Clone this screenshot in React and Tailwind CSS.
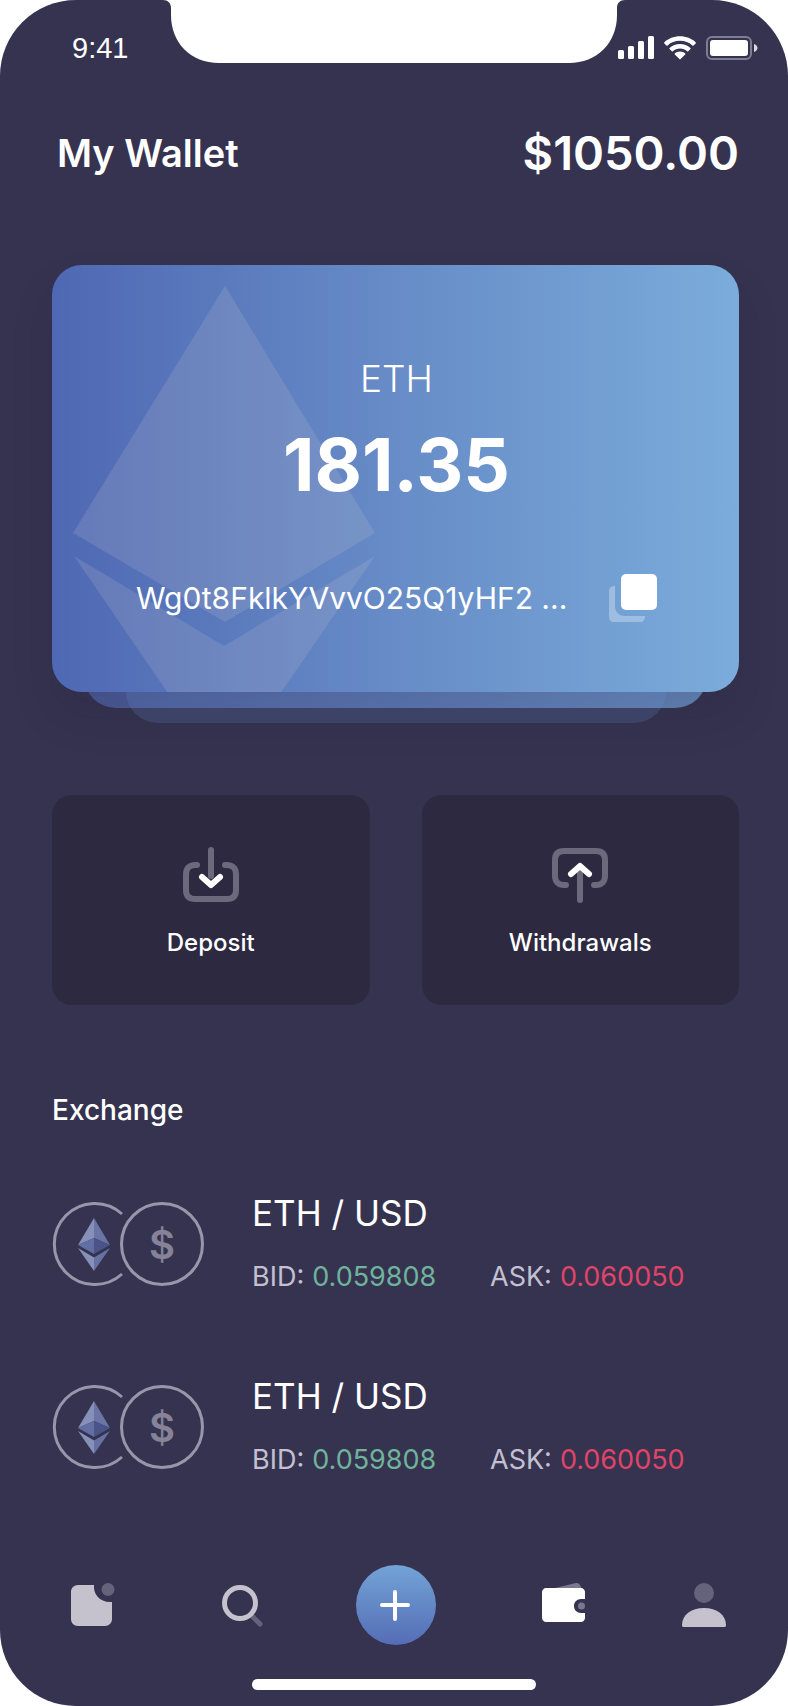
const pairs = [
    { id: 1, name: 'ETH / USD', bid: '0.059808', ask: '0.060050' },
    { id: 2, name: 'ETH / USD', bid: '0.059808', ask: '0.060050' },
];

function Notch() {
    return (
        <svg className="absolute top-0 left-1/2 -translate-x-1/2" width="462" height="63" viewBox="0 0 462 63" fill="#fff" aria-hidden="true">
            <path d="M0 0C5 0 8 3 8 8V15C8 43 28 63 56 63H406C434 63 454 43 454 15V8C454 3 457 0 462 0Z" />
        </svg>
    );
}

function StatusBar() {
    return (
        <div className="flex h-24 items-center justify-between pl-[72px] pr-[30px]">
            <span className="font-['Liberation_Sans',sans-serif] text-[29px] leading-8">9:41</span>
            <div className="flex items-center gap-2.5">
                <svg width="36" height="24" viewBox="0 0 36 24" fill="#fff" aria-hidden="true">
                    <rect x="0" y="14" width="6" height="9" rx="1.5" />
                    <rect x="10" y="10" width="6" height="13" rx="1.5" />
                    <rect x="20" y="5" width="6" height="18" rx="1.5" />
                    <rect x="30" y="0" width="6" height="23" rx="1.5" />
                </svg>
                <svg width="32" height="24" viewBox="0 0 32 24" fill="#fff" aria-hidden="true">
                    <path d="M16 0.3C22.2 0.3 27.6 2.6 31.6 6.2C32 6.6 32 7 31.7 7.4L29.6 9.4C29.2 9.8 28.8 9.8 28.4 9.4C25 6.4 20.8 4.8 16 4.8S7 6.4 3.6 9.4C3.2 9.8 2.8 9.8 2.4 9.4L0.3 7.4C0 7 0 6.6 0.4 6.2C4.4 2.6 9.8 0.3 16 0.3Z" />
                    <path d="M16 8C20 8 23.6 9.5 26.4 11.9C26.8 12.3 26.8 12.7 26.4 13.1L24.2 15.2C23.8 15.6 23.5 15.5 23.1 15.2C21.2 13.5 18.7 12.5 16 12.5S10.8 13.5 8.9 15.2C8.5 15.5 8.2 15.6 7.8 15.2L5.6 13.1C5.2 12.7 5.2 12.3 5.6 11.9C8.4 9.5 12 8 16 8Z" />
                    <path d="M16 15.5C18 15.5 19.8 16.2 21.2 17.4C21.6 17.8 21.6 18.1 21.2 18.5L16.6 23.1C16.2 23.5 15.8 23.5 15.4 23.1L10.8 18.5C10.4 18.1 10.4 17.8 10.8 17.4C12.2 16.2 14 15.5 16 15.5Z" />
                </svg>
                <svg width="52" height="24" viewBox="0 0 52 24" aria-hidden="true">
                    <rect x="1" y="1" width="44" height="22" rx="5" fill="none" stroke="#7f7d92" strokeWidth="2" />
                    <rect x="4" y="4" width="38" height="16" rx="3" fill="#fff" />
                    <path d="M48 8C50.5 9 51.5 10.5 51.5 12S50.5 15 48 16Z" fill="#d9d8df" />
                </svg>
            </div>
        </div>
    );
}

function BalanceCard() {
    return (
        <section className="relative mt-[55px]">
            {/* Stacked cards peeking out below */}
            <div className="absolute inset-x-8 -bottom-4 h-24 rounded-[32px] bg-linear-to-r from-[#495994] to-[#6486b6]" />

            <div className="relative overflow-hidden rounded-[30px] bg-linear-to-r from-[#4f68b3] via-[#678cc7] to-[#7bacdb] pl-[84px] pr-[82px] pt-[90px] pb-[70px] shadow-[0_24px_40px_rgba(35,30,60,0.15)]">
                <svg className="absolute top-0 left-0" width="330" height="427" viewBox="0 0 330 427" fill="#d2c9d2" fillOpacity="0.17" aria-hidden="true">
                    <path d="M173 21L323 268L173 357L21 268Z" />
                    <path d="M22 291L172 381L323 291L172 510Z" />
                </svg>
                <div className="relative flex flex-col items-center">
                    <h2 className="text-[37px] font-light leading-[48px]">ETH</h2>
                    <p className="mt-[22px] text-[73px] font-bold leading-[80px]">181.35</p>
                    <div className="mt-[69px] flex w-full items-center justify-between">
                        <span className="text-[30px] leading-10">Wg0t8FklkYVvvO25Q1yHF2 ...</span>
                        <button aria-label="Copy address" className="shrink-0">
                            <svg width="48" height="48" viewBox="0 0 48 48">
                                <rect x="12" y="0" width="36" height="36" rx="5" fill="#fff" />
                                <path d="M6 12C2 12 0 14 0 18V43C0 46 2 48 5 48H31C34 48 36 46 36 42H16C10 42 6 38 6 32Z" fill="#fff" fillOpacity="0.3" />
                            </svg>
                        </button>
                    </div>
                </div>
            </div>

            <div className="absolute top-full left-[74px] right-[73px] h-[31px] overflow-hidden">
                <div className="-mt-16 h-[95px] rounded-[32px] bg-[#6f96dc]/18" />
            </div>
        </section>
    );
}

function ActionButton({ label, children }) {
    return (
        <button className="flex flex-col items-center rounded-[20px] bg-[#2c2940] pt-[51px] pb-[46px]">
            <svg width="58" height="58" viewBox="0 0 58 58" fill="none" strokeWidth="6" strokeLinecap="round" strokeLinejoin="round" aria-hidden="true">
                {children}
            </svg>
            <span className="mt-[23px] text-[24px] font-medium leading-8">{label}</span>
        </button>
    );
}

function PairIcon() {
    return (
        <svg className="shrink-0" width="152" height="86" viewBox="0 0 152 86" aria-hidden="true">
            <path d="M70 14A40.500 40.500 0 1 0 70 74" fill="none" stroke="#9896aa" strokeWidth="3" />
            <circle cx="110" cy="44" r="40.500" fill="none" stroke="#9896aa" strokeWidth="3" />
            <path d="M42 18L26 45L42 38Z" fill="#8790b8" />
            <path d="M42 18L58 45L42 38Z" fill="#6a74a5" />
            <path d="M26 45L42 38V54Z" fill="#636fa4" />
            <path d="M58 45L42 38V54Z" fill="#4a5488" />
            <path d="M26 48L42 57.500V71Z" fill="#8790b8" />
            <path d="M58 48L42 57.500V71Z" fill="#6871a3" />
            <text x="110" y="59" textAnchor="middle" className="fill-[#868398] font-['Inter',sans-serif] text-[40px] font-semibold">$</text>
        </svg>
    );
}

function Nav() {
    return (
        <nav className="mt-[87px] grid grid-cols-[1fr_80px_1fr] items-center">
            <div className="flex items-center gap-[107px] pl-[19px]">
                <button aria-label="Feed">
                    <svg width="44" height="44" viewBox="0 0 44 44">
                        <path d="M7 2H23C22 11 29 20 41 19V36C41 40 38 43 34 43H7C3 43 0 40 0 36V9C0 5 3 2 7 2Z" fill="#c5c2cd" />
                        <circle cx="37" cy="6.500" r="6.500" fill="#65637b" />
                    </svg>
                </button>
                <button aria-label="Search">
                    <svg width="44" height="44" viewBox="0 0 44 44" fill="none">
                        <path d="M31 34L38 41" stroke="#65637b" strokeWidth="5" strokeLinecap="round" />
                        <circle cx="18" cy="20" r="15.500" stroke="#c5c2cd" strokeWidth="5" />
                    </svg>
                </button>
            </div>
            <button aria-label="Add" className="flex size-20 items-center justify-center rounded-full bg-linear-to-b from-[#73a3d6] to-[#556db6]">
                <svg width="32" height="32" viewBox="0 0 32 32" stroke="#fff" strokeWidth="4" strokeLinecap="round">
                    <path d="M15 3V30M2 16H28" />
                </svg>
            </button>
            <div className="flex items-center justify-end gap-[96px] pr-[13px]">
                <button aria-label="Wallet">
                    <svg width="44" height="44" viewBox="0 0 44 44">
                        <path d="M13 5L34 0C36 0 37 0.500 38 2L40 6H13Z" fill="#7a778e" />
                        <path d="M4 5H39C41 5 43 7 43 9V16H39C35 16 32 19 32 23S35 30 39 30H43V35C43 37 41 39 39 39H4C2 39 0 37 0 35V9C0 7 2 5 4 5Z" fill="#fff" />
                        <circle cx="39.500" cy="23" r="3.500" fill="#7a778e" />
                    </svg>
                </button>
                <button aria-label="Profile">
                    <svg width="44" height="44" viewBox="0 0 44 44">
                        <circle cx="22" cy="10" r="10" fill="#65637b" />
                        <path d="M22 25C35 25 44 32 44 42C44 43.500 43.500 44 42 44H2C0.500 44 0 43.500 0 42C0 32 9 25 22 25Z" fill="#c5c2cd" />
                    </svg>
                </button>
            </div>
        </nav>
    );
}

export default function App() {
    return (
        <div className="min-h-screen bg-white">
            <main className="relative overflow-hidden rounded-[76px] bg-[#35334f] pb-4 font-['Inter',sans-serif] text-white">
                <Notch />
                <StatusBar />

                <div className="pl-[52px] pr-[49px]">
                    <header className="flex h-[114px] items-center justify-between pl-[5px]">
                        <h1 className="text-[38px] font-semibold leading-[44px]">My Wallet</h1>
                        <span className="text-[47px] font-semibold leading-[56px]">$1050.00</span>
                    </header>

                    <BalanceCard />

                    <div className="mt-[103px] grid grid-cols-2 gap-[52px]">
                        <ActionButton label="Deposit">
                            <path d="M15 19H13C7 19 4 23 4 28V44C4 50 7 53 13 53H45C51 53 54 50 54 44V28C54 23 51 19 45 19H43M29 4V30" stroke="#6c697c" />
                            <path d="M20 31L29 39L38 31" stroke="#fff" />
                        </ActionButton>
                        <ActionButton label="Withdrawals">
                            <path d="M15 39H13C7 39 4 35 4 30V14C4 8 7 5 13 5H45C51 5 54 8 54 14V30C54 35 51 39 45 39H43M29 54V26" stroke="#6c697c" />
                            <path d="M20 28L29 20L38 28" stroke="#fff" />
                        </ActionButton>
                    </div>

                    <section className="mt-[87px]">
                        <h2 className="text-[28px] font-medium leading-9">Exchange</h2>
                        <ul className="mt-[63px] flex flex-col gap-[79px]">
                            {pairs.map((pair) => (
                                <li key={pair.id} className="flex items-center gap-12">
                                    <PairIcon />
                                    <div>
                                        <h3 className="text-[35px] leading-[44px]">{pair.name}</h3>
                                        <div className="mt-6 grid grid-cols-[238px_auto] text-[27px] leading-9">
                                            <p className="flex gap-2 text-[#6fb39b]">
                                                <span className="text-[#c3c0d2]">BID:</span>
                                                {pair.bid}
                                            </p>
                                            <p className="flex gap-2 text-[#e04468]">
                                                <span className="text-[#c3c0d2]">ASK:</span>
                                                {pair.ask}
                                            </p>
                                        </div>
                                    </div>
                                </li>
                            ))}
                        </ul>
                    </section>

                    <Nav />
                </div>

                {/* Home indicator */}
                <div className="mx-auto mt-[34px] h-[11px] w-[284px] rounded-full bg-white" />
            </main>
        </div>
    );
}
